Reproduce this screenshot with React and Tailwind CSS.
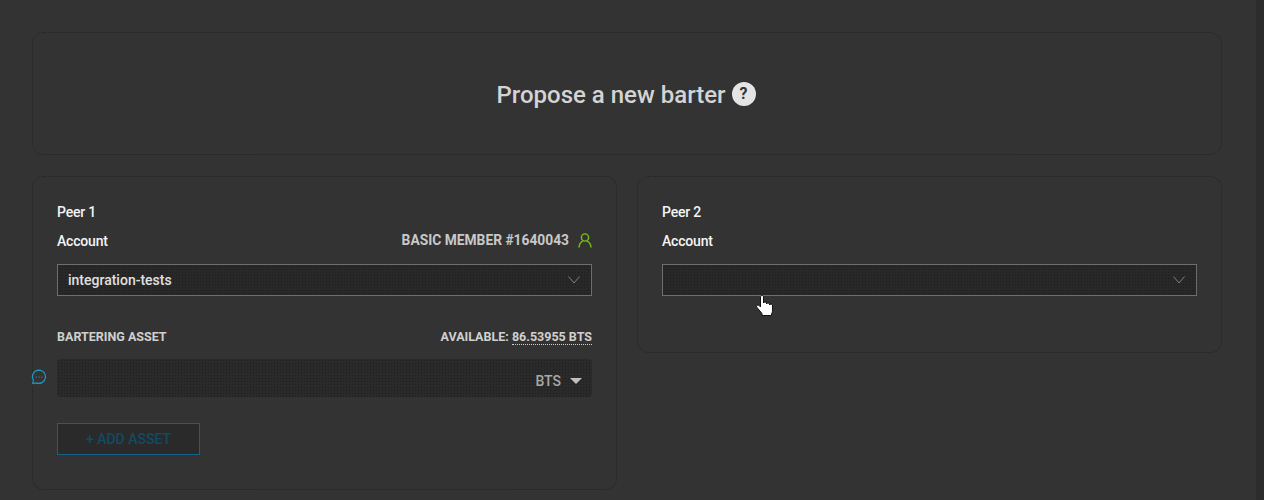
import React from 'react';

const labelClass = 'text-[14px] leading-[20px] font-medium tracking-[-0.2px] text-[#f4f4f4]';
const smallCapsClass = 'text-[12.5px] leading-[16px] font-bold text-[#d0d0d0]';
const ditherClass = 'bg-[radial-gradient(#1e1e1e_0.6px,transparent_0.7px)] bg-[length:3px_3px]';

const AccountSelect = ({ value }) => (
  <div className={`flex h-8 items-center justify-between border border-[#6e6e6e] bg-[#282828] pl-[10px] pr-[11px] ${ditherClass}`}>
    <span className="text-[14px] font-medium text-[#e0e0e0]">{value}</span>
    <svg width="12" height="8" viewBox="0 0 12 8" fill="none" className="text-[#808080]">
      <path d="M0.5 0.5L6 7L11.5 0.5" stroke="currentColor" strokeWidth="1" />
    </svg>
  </div>
);

const Card = ({ className = '', children }) => (
  <div className={`rounded-xl border border-dotted border-[#242424] px-6 pt-[26px] ${className}`}>
    {children}
  </div>
);

const MemberIcon = () => (
  <svg width="14" height="15" viewBox="0 0 14 15" fill="none" className="text-[#7cc015]">
    <circle cx="7" cy="4.5" r="3.6" stroke="currentColor" strokeWidth="1.4" />
    <path d="M1 14.5c0-3.6 2.4-6 4-6.4M13 14.5c0-3.6-2.4-6-4-6.4" stroke="currentColor" strokeWidth="1.4" />
  </svg>
);

const HandCursor = () => (
  <svg width="18" height="23" viewBox="0 0 18 23" className="absolute left-[756px] top-[295px]">
    <path
      d="M4.5 2c0-2 3-2 3 0v6c0-1.5 3-1.5 3 0v1c0-1.5 3-1.5 3 0v1c0-1.2 3-1.2 3 0v5c0 2-.5 3-1 4v1.5H6v-2L1 12.5c-1.2-1.6.8-3.2 2-2L4.5 12z"
      fill="#fff"
      stroke="#111"
      strokeWidth="1"
    />
  </svg>
);

const App = () => {
  return (
    <div className="relative flex h-[500px] w-[1264px] overflow-hidden bg-[#333333] font-['Roboto',sans-serif]">
      <main className="flex w-[1256px] flex-col gap-[21px] pl-8 pr-[34px] pt-8">
        {/* Title card */}
        <div className="flex h-[123px] items-center justify-center gap-[6px] rounded-xl border border-dotted border-[#242424] pr-[2px] pt-[2px]">
          <h1 className="text-[24px] font-medium leading-none text-[#d4d4d4]">Propose a new barter</h1>
          <span className="-mt-[2px] flex h-6 w-6 items-center justify-center rounded-full bg-[#e4e4e4] text-[16px] font-bold leading-none text-[#333333]">
            ?
          </span>
        </div>

        <div className="grid grid-cols-2 items-start gap-5">
          {/* Peer 1 */}
          <Card className="h-[314px]">
            <p className={`${labelClass} -mt-[1px]`}>Peer 1</p>
            <div className="mt-[9px] flex items-center justify-between">
              <span className={labelClass}>Account</span>
              <span className="flex -translate-y-px items-center gap-[9px] text-[13.8px] font-bold leading-[20px] text-[#c8c8c8]">
                BASIC MEMBER #1640043
                <MemberIcon />
              </span>
            </div>
            <div className="mt-[13px]">
              <AccountSelect value="integration-tests" />
            </div>
            <div className="mt-[33px] flex items-center justify-between">
              <span className={smallCapsClass}>BARTERING ASSET</span>
              <span className={smallCapsClass}>
                AVAILABLE:{' '}
                <span className="border-b border-dotted border-[#d0d0d0]">86.53955 BTS</span>
              </span>
            </div>
            <div className={`mt-[14px] flex h-[38px] items-center justify-end gap-2 rounded bg-[#2a2a2a] pr-[10px] pt-[6px] ${ditherClass}`}>
              <span className="-ml-px mr-px text-[14px] font-medium text-[#a8a8a8]">BTS</span>
              <span className="h-0 w-0 border-x-[6px] border-t-[6px] border-x-transparent border-t-[#c0c0c0]" />
            </div>
            <div className="mt-[26px] flex h-8 w-[143px] items-center justify-center border border-solid border-[#12628a] bg-[#2a2a2a] text-[14px] font-medium text-[#134a63]">
              + ADD ASSET
            </div>
          </Card>

          {/* Peer 2 */}
          <Card className="h-[177px]">
            <p className={`${labelClass} -mt-[1px]`}>Peer 2</p>
            <div className="mt-[9px] flex items-center justify-between">
              <span className={labelClass}>Account</span>
            </div>
            <div className="mt-[13px]">
              <AccountSelect value="" />
            </div>
          </Card>
        </div>
      </main>

      <div className="w-2 bg-[#2c2c2c]" />

      {/* Chat bubble floats over the card edge */}
      <svg width="16" height="16" viewBox="0 0 16 16" fill="none" className="absolute left-[31px] top-[369px]">
        <path
          d="M8 1.2a6.6 6.6 0 1 1-2.6 12.7L1.8 14.6l.6-3.4A6.6 6.6 0 0 1 8 1.2z"
          stroke="#1a9ac9"
          strokeWidth="1.2"
        />
        <circle cx="5.2" cy="8" r="0.6" fill="#6f8f9c" />
        <circle cx="8" cy="8" r="0.6" fill="#6f8f9c" />
        <circle cx="10.8" cy="8" r="0.6" fill="#6f8f9c" />
      </svg>

      <HandCursor />
    </div>
  );
};

export default App;
